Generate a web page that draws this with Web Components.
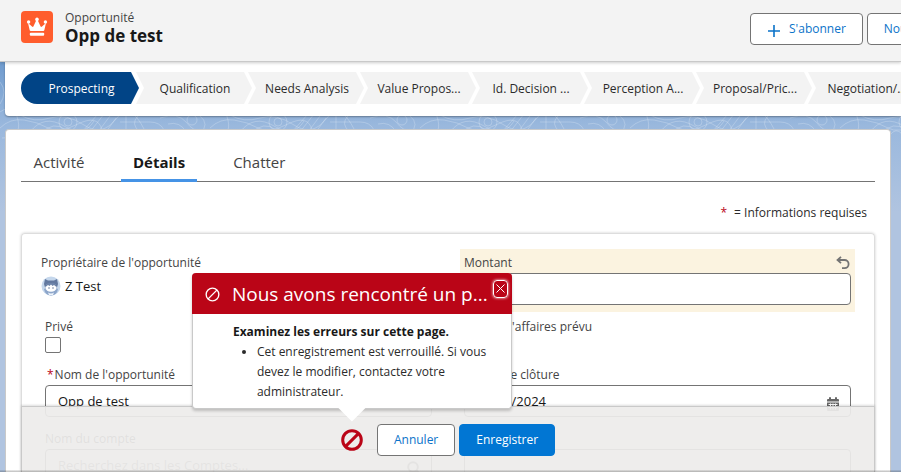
<!DOCTYPE html>
<html lang="fr">
<head>
<meta charset="utf-8">
<title>Opp de test | Opportunité</title>
<style>
html, body { margin: 0; height: 100%; }
body {
  background: #fff; overflow: hidden; color: #181818;
  font-family: "Open Sans", "Noto Sans", sans-serif; font-size: 12px; line-height: 16px;
  --grey: #444; --line: #747474; --link: #0b73c9; --blue: #0176d3;
}
</style>
</head>
<body>
<record-page>
  <record-header slot="header" kind="Opportunité" name="Opp de test">
    <ui-button icon>S'abonner</ui-button>
    <ui-button>Nouveau</ui-button>
  </record-header>
  <sales-path slot="path">
    <path-step current>Prospecting</path-step>
    <path-step>Qualification</path-step>
    <path-step>Needs Analysis</path-step>
    <path-step>Value Propos...</path-step>
    <path-step>Id. Decision ...</path-step>
    <path-step>Perception A...</path-step>
    <path-step>Proposal/Pric...</path-step>
    <path-step>Negotiation/...</path-step>
  </sales-path>
  <record-tabs>
    <record-tab>Activité</record-tab>
    <record-tab selected>Détails</record-tab>
    <record-tab>Chatter</record-tab>
  </record-tabs>
  <required-legend></required-legend>
  <record-form>
    <owner-field label="Propriétaire de l'opportunité" name="Z Test"></owner-field>
    <form-field label="Montant" edited></form-field>
    <check-field label="Privé"></check-field>
    <static-field>Chiffre d'affaires prévu</static-field>
    <form-field label="Nom de l'opportunité" required value="Opp de test"></form-field>
    <form-field label="Date de clôture" required value="01/01/2024" icon="calendar"></form-field>
    <form-field label="Nom du compte" placeholder="Recherchez dans les Comptes..." icon="search"></form-field>
    <form-field label=""></form-field>
    <action-bar slot="actions">
      <error-popover slot="error" heading="Nous avons rencontré un p..." summary="Examinez les erreurs sur cette page.">
        Cet enregistrement est verrouillé. Si vous devez le modifier, contactez votre administrateur.
      </error-popover>
      <ui-button>Annuler</ui-button>
      <ui-button brand>Enregistrer</ui-button>
    </action-bar>
  </record-form>
</record-page>

<script>
const define = (name, render) => customElements.define(name, class extends HTMLElement {
  connectedCallback() {
    if (this.shadowRoot) return;
    const t = document.createElement('template');
    t.innerHTML = '<style>*{box-sizing:border-box}:host{display:block;box-sizing:border-box}button,input{font:inherit}</style>' + render(this);
    this.attachShadow({ mode: 'open' }).append(t.content.cloneNode(true));
  }
});
const attr = (el, n) => (el.getAttribute(n) || '').replace(/"/g, '&quot;');

define('record-page', () => `
<style>
:host { height: 100vh; display: flex; flex-direction: column; padding-bottom: 3px; }
main { flex: 1; min-height: 0; position: relative; display: flex; flex-direction: column; gap: 13px; overflow: hidden;
  background: linear-gradient(#6f9bce 0, #9ab8dd 64px, #b0c4e0 150px); }
.topo { position: absolute; left: 0; top: 0; width: 100%; height: 96px; }
.path { position: relative; margin-left: 5px; padding: 10px 0 12px 16px; background: #fff; border-radius: 0 0 0 4px; box-shadow: 0 1px 2px #0005; }
.card { position: relative; flex: 1; min-height: 0; margin: 0 10px 0 5px; background: #fff; border: 1px solid #c9c9c9; border-bottom: 0; border-radius: 4px 4px 0 0;
  padding: 15px 15px 0; display: flex; flex-direction: column; }
.edge { position: absolute; inset: auto 0 0 0; height: 2px; background: linear-gradient(#0001, #0004); }
</style>
<slot name="header"></slot>
<main>
  <svg class="topo" aria-hidden="true"><defs><pattern id="t" width="210" height="96" patternUnits="userSpaceOnUse">
    <g fill="none" stroke="#fff" stroke-opacity=".22" stroke-width="1">
      <path d="M0 20Q8 30 0 42M0 50Q14 40 18 58T2 76M0 66q10-10 24-8t24 8 30-4 24 6M20 53q14 8 30 3t34 7 32-6 28 10"/>
      <path d="M30 70q14-18 34-6t30-5M40 72q14-14 26-4M50 73q6-8 12-1M82 70l16-18M90 70l14-18M98 70l12-16M106 70l10-14"/>
      <path d="M126 54v14M120 60h30q10 0 14 8M160 56q18-6 26 4t14 8M168 62q12-3 18 8M200 54q10 8 0 18M138 54q-8 8 2 16"/>
      <circle cx="68" cy="60" r="4"/><circle cx="68" cy="60" r="9"/><circle cx="192" cy="58" r="5"/>
    </g></pattern></defs><rect width="100%" height="96" fill="url(#t)"/></svg>
  <div class="path"><slot name="path"></slot></div>
  <section class="card"><slot></slot></section>
  <div class="edge"></div>
</main>`);

define('record-header', el => `
<style>
:host { position: relative; z-index: 2; background: #f3f3f3; border-bottom: 1px solid #c9c9c9; box-shadow: 0 1px 3px #0003; }
header { display: flex; align-items: flex-start; padding: 11px 0 18px 21px; overflow: hidden; }
.icon { width: 32px; height: 32px; border-radius: 4px; background: #ff5d2d; margin-right: 12px; }
.text { flex: 1; margin-top: -1px; margin-bottom: -4px; }
.kind { color: var(--grey); font-size: 12px; line-height: 16px; }
h1 { margin: 0; font-size: 17px; line-height: 20px; font-weight: 700; }
.actions { display: flex; gap: 4px; padding-top: 2px; margin-bottom: -2px; flex: 0 0 151px; min-width: 0; }
</style>
<header>
  <svg class="icon" viewBox="0 0 32 32" aria-hidden="true"><g fill="#fff">
    <circle cx="7.6" cy="11" r="1.7"/><circle cx="16" cy="8.4" r="1.8"/><circle cx="24.4" cy="11" r="1.7"/>
    <path d="M7 12l4 3.6q1 .8 1.5-.4L15.400 9h1.200l2.900 6.200q.5 1.200 1.500.4L25 12l-1.700 7.300q-.2.8-1 .8H9.700q-.8 0-1-.8z"/>
    <rect x="8.800" y="21.700" width="14.400" height="3" rx="1"/></g></svg>
  <div class="text"><div class="kind">${attr(el, 'kind')}</div><h1>${attr(el, 'name')}</h1></div>
  <div class="actions"><slot></slot></div>
</header>`);

define('ui-button', el => {
  const brand = el.hasAttribute('brand');
  return `
<style>
:host { flex: none; }
button { display: flex; align-items: center; gap: 8px; height: 32px; padding: 0 16px; border-radius: 4px; white-space: nowrap;
  font-size: 12px; border: 1px solid ${brand ? 'var(--blue)' : 'var(--line)'}; background: ${brand ? 'var(--blue)' : '#fff'}; color: ${brand ? '#fff' : 'var(--link)'}; }
svg { margin-top: 3px; }
</style>
<button type="button">${el.hasAttribute('icon') ? '<svg width="14" height="14" viewBox="0 0 14 14" aria-hidden="true"><path d="M7 1v12M1 7h12" stroke="currentColor" stroke-width="1.600" fill="none"/></svg>' : ''}<slot></slot></button>`;
});

define('sales-path', () => `
<style>nav { display: flex; overflow: hidden; }</style>
<nav aria-label="Étapes"><slot></slot></nav>`);

define('path-step', el => `
<style>
:host { flex: 0 0 116px; margin-right: -4px; }
a { display: flex; align-items: center; justify-content: center; height: 32px; color: #2b2b2b; text-decoration: none; white-space: nowrap;
  background: #f3f3f3; clip-path: polygon(0 0, calc(100% - 8px) 0, 100% 50%, calc(100% - 8px) 100%, 0 100%, 8px 50%); padding: 2px 0 0 2px; }
:host([current]) { flex-basis: 119px; }
:host([current]) a { background: #014486; color: #fff; border-radius: 16px 0 0 16px;
  clip-path: polygon(0 0, calc(100% - 9px) 0, calc(100% - 1px) 50%, calc(100% - 9px) 100%, 0 100%); }
</style>
<a href="#"><slot></slot></a>`);

define('record-tabs', () => `
<style>div { display: flex; gap: 24px; border-bottom: 1px solid var(--line); }</style>
<div role="tablist"><slot></slot></div>`);

define('record-tab', el => `
<style>
button { border: 0; background: none; padding: 0 12px; min-width: 76px; height: 37px; margin-bottom: -1px; font-size: 15px; color: var(--grey); border-bottom: 3px solid transparent; }
:host([selected]) button { color: #181818; font-weight: 700; border-bottom-color: #4593e6; }
</style>
<button role="tab" aria-selected="${el.hasAttribute('selected')}"><slot></slot></button>`);

define('required-legend', () => `
<style>:host { text-align: right; padding: 23px 8px 12px 0; color: #2b2b2b; } abbr { color: #ba0517; margin-right: 4px; text-decoration: none; }</style>
<abbr>*</abbr> = Informations requises`);

define('record-form', () => `
<style>
:host { position: relative; flex: 1; min-height: 0; }
.clip { height: 100%; overflow: hidden; border: 1px solid #ddd; border-bottom: 0; border-radius: 4px 4px 0 0; box-shadow: 0 0 3px #0003; }
form { display: grid; grid-template-columns: 1fr 1fr; column-gap: 24px; padding: 15px 19px 0; grid-template-rows: 64px 48px 64px 64px; }
.bar { position: absolute; inset: auto 0 0 0; }
</style>
<div class="clip"><form><slot></slot></form></div>
<div class="bar"><slot name="actions"></slot></div>`);

define('owner-field', el => `
<style>
:host { padding-top: 6px; color: var(--grey); }
.who { display: flex; align-items: center; gap: 4px; margin-top: 5px; color: #181818; font-size: 13px; }
</style>
<div>${attr(el, 'label')}</div>
<div class="who"><svg width="20" height="20" viewBox="0 0 20 20" aria-hidden="true">
  <circle cx="10" cy="10" r="9.500" fill="#c5d7ec"/><path d="M4 3l3 1.500h6L16 3l1 5-1.500 5h-11L3 8z" fill="#62789f"/>
  <path d="M3 13q7-5 14 0-1 6-7 6.500Q4 19 3 13z" fill="#8da6ca"/><ellipse cx="10" cy="11.500" rx="5.600" ry="4.300" fill="#fff"/>
  <path d="M4.500 11q1-5 5.500-4 4.500-1 5.500 4l-2.500-2-1.500 1L10 8.500 8.500 10 7 9z" fill="#6d84aa"/><circle cx="8" cy="12" r=".7" fill="#4a5f85"/><circle cx="12" cy="12" r=".7" fill="#4a5f85"/>
  <path d="M7 16.500q3 2 6 0l-1 2.500H8z" fill="#eef4fb"/></svg><span>${attr(el, 'name')}</span></div>`);

define('check-field', el => `
<style>
:host { padding: 6px 4px 0; color: var(--grey); }
label { display: block; }
input { appearance: none; display: block; width: 16px; height: 16px; margin: 2px 0 0; border: 1px solid var(--line); border-radius: 2px; background: #fff; }
</style>
<label for="c">${attr(el, 'label')}</label><input id="c" type="checkbox">`);

define('static-field', () => `<style>:host { padding: 6px 4px 0; color: var(--grey); }</style><slot></slot>`);

const icons = {
  calendar: '<svg width="14" height="14" viewBox="0 0 14 14"><path fill="#666" d="M1 4.500V3q0-1 1-1h1V1q0-1 1-1t1 1v1h4V1q0-1 1-1t1 1v1h1q1 0 1 1v1.500zM1 5.500h12V13q0 1-1 1H2q-1 0-1-1z"/><path stroke="#fff" d="M2.500 7.500h9M2.500 10.500h9M4.500 6.500v6M7 6.500v6M9.500 6.500v6"/></svg>',
  search: '<svg width="14" height="14" viewBox="0 0 14 14"><circle cx="6" cy="6" r="4.800" fill="none" stroke="#777" stroke-width="2"/><path stroke="#777" stroke-width="2" d="M9.500 9.500L13 13"/></svg>'
};

define('form-field', el => `
<style>
:host { padding: 6px 4px 8px; }
:host([edited]) { background: #fbf3e0; margin-bottom: 1px; padding-bottom: 7px; }
.top { display: flex; justify-content: space-between; align-items: center; height: 16px; margin-bottom: 2px; color: var(--grey); }
abbr { color: #ba0517; text-decoration: none; margin: 0 1px 0 2px; }
.undo { border: 0; background: none; padding: 0; width: 16px; height: 16px; color: #747474; }
.box { position: relative; }
input { display: block; width: 100%; height: 32px; padding: 0 12px; border: 1px solid var(--line); border-radius: 4px; background: #fff; color: #181818; font-size: 13px; }
.box svg { position: absolute; right: 11px; top: 12px; }
</style>
<div class="top"><label for="i">${el.hasAttribute('required') ? '<abbr>*</abbr>' : ''}${attr(el, 'label')}</label>
${el.hasAttribute('edited') ? '<button class="undo" type="button" aria-label="Annuler la modification"><svg width="16" height="16" viewBox="0 0 16 16"><path d="M6 1.800L2.500 5 6 8.200M3 5h6.500a4 4 0 010 8.200H7" fill="none" stroke="currentColor" stroke-width="1.800"/></svg></button>' : ''}</div>
<div class="box"><input id="i" type="text" value="${attr(el, 'value')}" placeholder="${attr(el, 'placeholder')}">${icons[el.getAttribute('icon')] || ''}</div>`);

define('action-bar', () => `
<style>
div { display: flex; justify-content: center; align-items: center; gap: 4px; height: 66px; background: rgba(237, 236, 235, .93); border: 1px solid #c9c9c9; border-bottom: 0; box-shadow: 0 -1px 2px #0002; }
::slotted([slot=error]) { margin-right: 10px; }
</style>
<div><slot name="error"></slot><slot></slot></div>`);

const ban = (size, width) => `<svg width="${size}" height="${size}" viewBox="0 0 22 22" aria-hidden="true"><g fill="none" stroke="currentColor" stroke-width="${width}"><circle cx="11" cy="11" r="9.300"/><path d="M4.600 17.400L17.400 4.600"/></g></svg>`;

define('error-popover', el => `
<style>
:host { position: relative; width: 22px; height: 22px; }
.toggle { display: block; border: 0; padding: 0; background: none; color: #ba0517; width: 22px; height: 22px; }
.toggle svg, .head svg { display: block; }
section { position: absolute; left: 50%; bottom: 42px; transform: translateX(-50%); width: 320px; background: #fff; border: 1px solid #c9c9c9; border-top: 0; border-radius: 4px; box-shadow: 0 2px 3px #0003; }
section::after { content: ""; position: absolute; left: 50%; bottom: -14px; margin-left: -14px; width: 28px; height: 14px; background: #fff; clip-path: polygon(0 0, 100% 0, 50% 100%); }
.head { display: flex; align-items: center; gap: 12px; height: 41px; margin: 0 -1px; padding: 2px 12px 0 13px; background: #ba0517; color: #fff; border-radius: 4px 4px 0 0; }
h2 { margin: 0; font-size: 19px; line-height: 24px; font-weight: 400; white-space: nowrap; }
.close { position: absolute; right: 3px; top: 7px; width: 15px; height: 18px; padding: 0; display: grid; place-items: center; border: 1px solid #fff; border-radius: 4px; background: none; color: #fff; box-shadow: 0 0 3px #fff; }
.body { padding: 8px 16px 6px 40px; color: #2b2b2b; }
p { margin: 0; line-height: 20px; font-weight: 700; color: #181818; }
ul { margin: 0; padding-left: 24px; line-height: 20px; }
</style>
<button class="toggle" type="button" aria-label="Erreurs">${ban(22, 3)}</button>
<section role="dialog" aria-label="Erreurs">
  <div class="head">${ban(15, 2)}<h2>${attr(el, 'heading')}</h2></div>
  <button class="close" type="button" aria-label="Fermer"><svg width="9" height="9" viewBox="0 0 9 9"><path d="M.5.5l8 8M8.500.5l-8 8" stroke="currentColor"/></svg></button>
  <div class="body"><p>${attr(el, 'summary')}</p><ul><li><slot></slot></li></ul></div>
</section>`);
</script>
</body>
</html>
